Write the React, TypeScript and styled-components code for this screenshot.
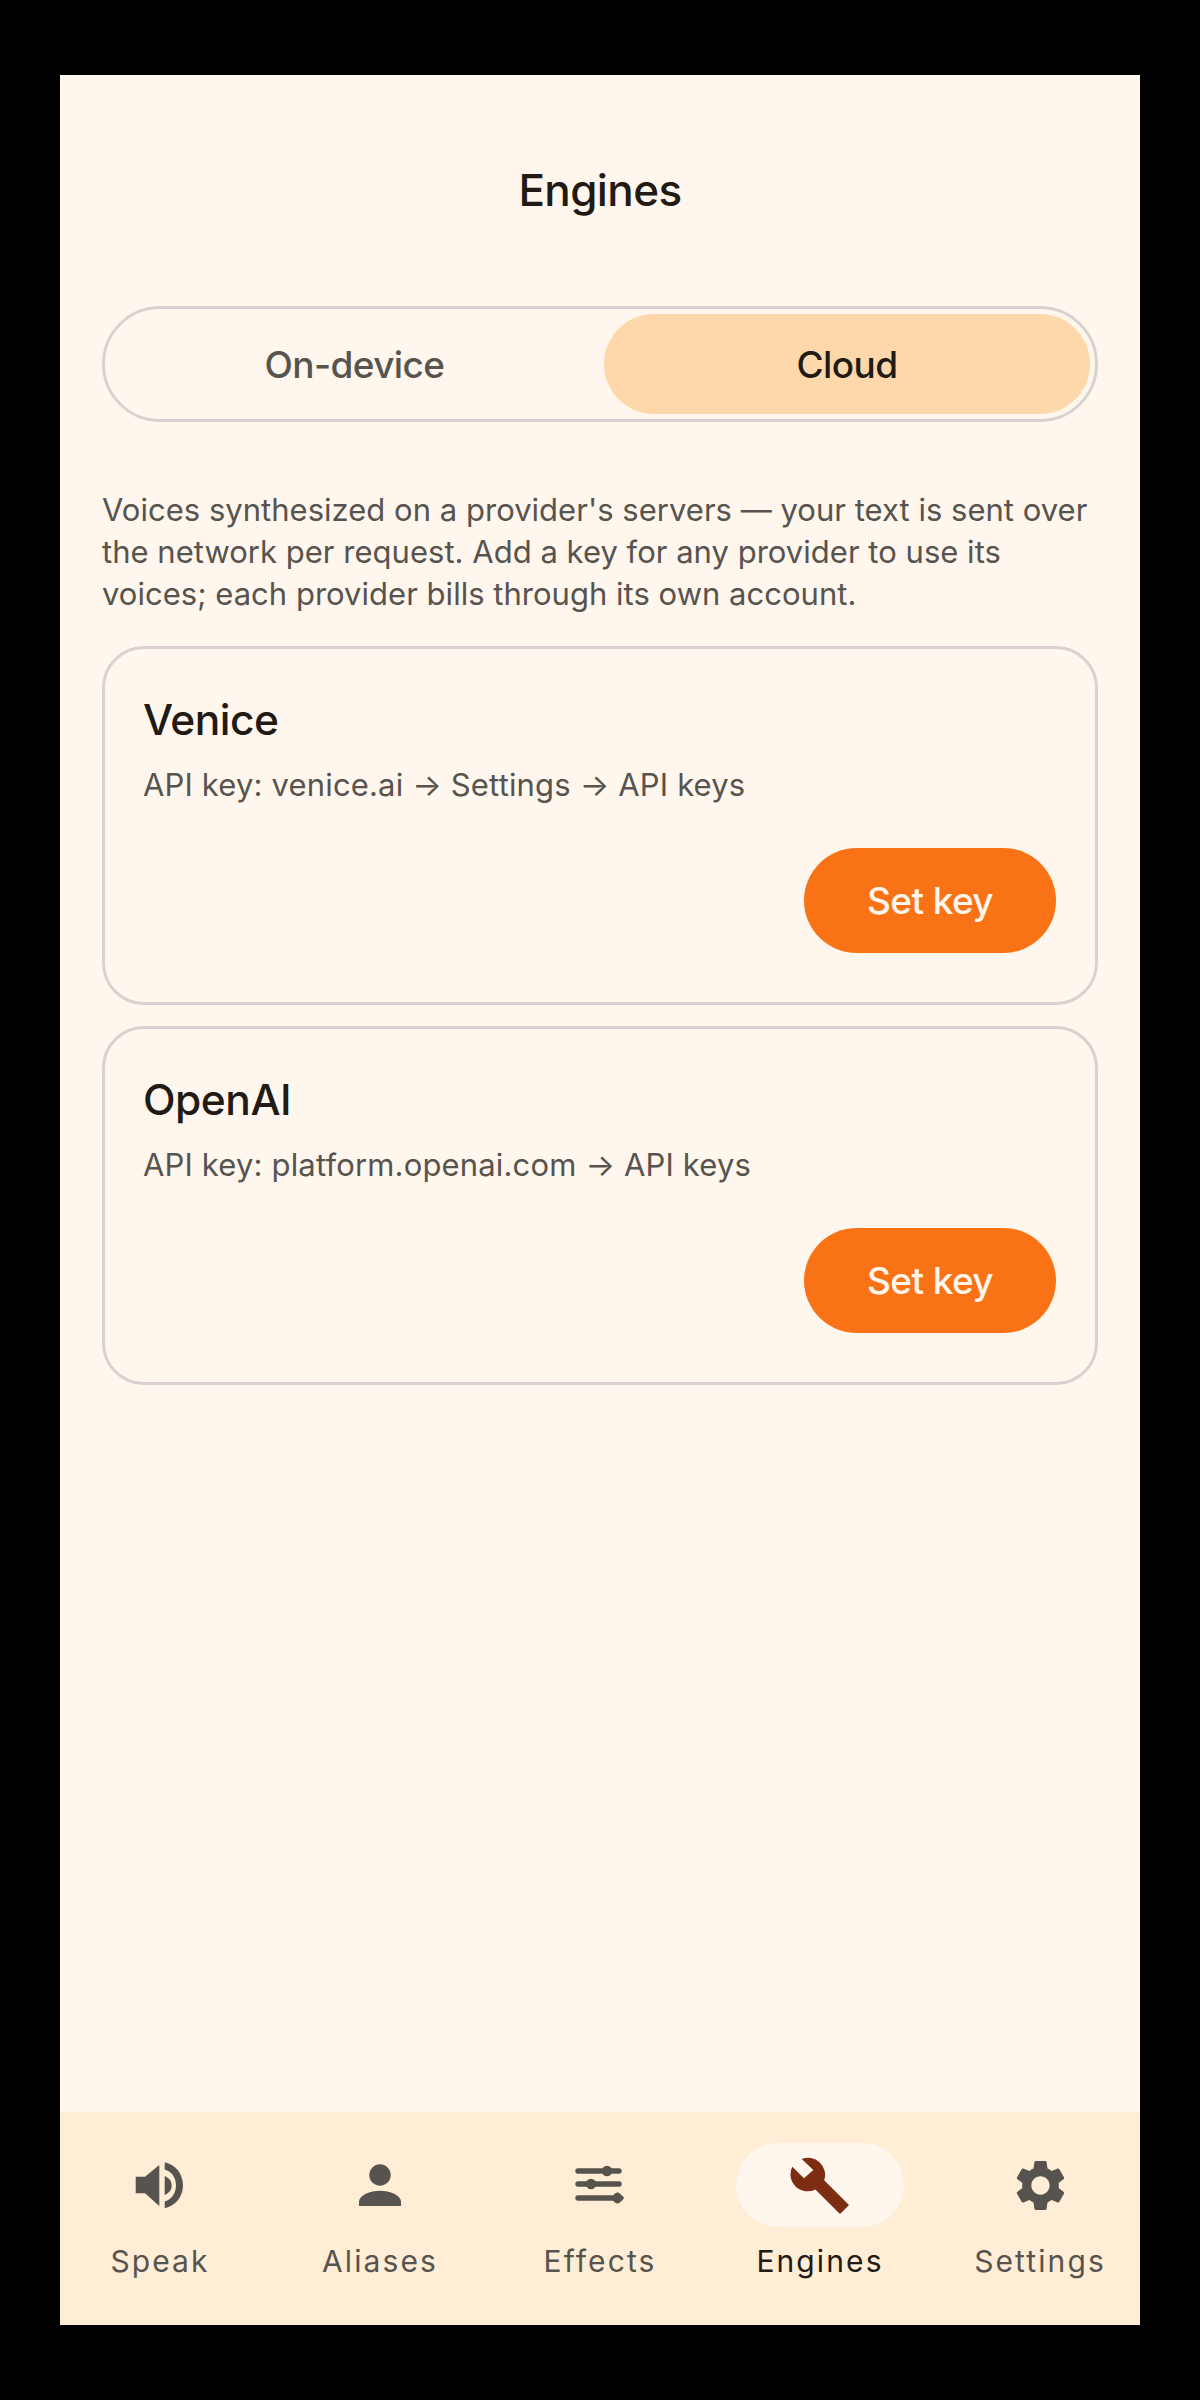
import * as React from 'react';
import styled, { createGlobalStyle } from 'styled-components';
import { MdSettings } from 'react-icons/md';

const GlobalStyle = createGlobalStyle`
  html, body {
    margin: 0;
    padding: 0;
    background: #000;
  }
  * {
    box-sizing: border-box;
  }
`;

const Frame = styled.div`
  width: 1200px;
  height: 2400px;
  padding: 75px 60px;
  background: #000;
  font-family: Inter, 'Noto Sans', sans-serif;
`;

const Screen = styled.div`
  width: 1080px;
  height: 2250px;
  display: flex;
  flex-direction: column;
  background: #fff7ed;
`;

const Content = styled.main`
  flex: 1;
  padding: 0 42px;
`;

const Title = styled.h1`
  margin: 0;
  padding: 90px 0 91px;
  font-size: 44px;
  line-height: 50px;
  font-weight: 500;
  letter-spacing: -0.6px;
  text-align: center;
  color: #221a14;
`;

const Segments = styled.div`
  height: 116px;
  padding: 5px 5px 5px 0;
  display: grid;
  grid-template-columns: 1fr 486px;
  border: 3px solid #d6d3d1;
  border-radius: 58px;
`;

const Segment = styled.div<{ $active?: boolean }>`
  display: flex;
  align-items: center;
  justify-content: center;
  border-radius: 50px;
  font-size: 37px;
  font-weight: 500;
  letter-spacing: -0.6px;
  color: ${(p) => (p.$active ? '#221a14' : '#57534e')};
  background: ${(p) => (p.$active ? '#fed7aa' : 'transparent')};
`;

const Intro = styled.p`
  margin: 67px 0 31px;
  font-size: 31px;
  line-height: 42px;
  letter-spacing: 0.02px;
  color: #57534e;
`;

const Cards = styled.div`
  display: flex;
  flex-direction: column;
  gap: 21px;
`;

const Card = styled.section`
  height: 359px;
  padding: 47px 39px 49px 38px;
  display: flex;
  flex-direction: column;
  border: 3px solid #d6d3d1;
  border-radius: 42px;
`;

const CardName = styled.div`
  font-size: 42.5px;
  line-height: 48px;
  font-weight: 500;
  letter-spacing: -0.5px;
  color: #221a14;
`;

const CardHint = styled.div`
  margin-top: 20px;
  font-size: 31px;
  line-height: 42px;
  letter-spacing: 0.16px;
  color: #57534e;
`;

const CardActions = styled.div`
  margin-top: auto;
  display: flex;
  justify-content: flex-end;
`;

const SetKey = styled.button`
  width: 252px;
  height: 105px;
  border: 0;
  border-radius: 53px;
  font-family: inherit;
  font-size: 37px;
  font-weight: 500;
  letter-spacing: -0.6px;
  color: #fff7ed;
  background: #f97316;
`;

const Nav = styled.nav`
  height: 213px;
  padding: 31px 20px 0;
  display: flex;
  justify-content: space-between;
  background: #ffedd5;
`;

const NavItem = styled.div`
  width: 160px;
  display: flex;
  flex-direction: column;
  align-items: center;
`;

const NavIcon = styled.div<{ $active?: boolean }>`
  flex: none;
  width: 168px;
  height: 84px;
  display: flex;
  align-items: center;
  justify-content: center;
  border-radius: 42px;
  color: ${(p) => (p.$active ? '#7c2d12' : '#57534e')};
  background: ${(p) => (p.$active ? '#fff7ed' : 'transparent')};
`;

const NavLabel = styled.div<{ $active?: boolean }>`
  margin-top: 14px;
  font-size: 30px;
  line-height: 40px;
  letter-spacing: 2.1px;
  white-space: nowrap;
  color: ${(p) => (p.$active ? '#221a14' : '#57534e')};
`;

const SpeakerIcon = () => (
  <svg width="50" height="50" viewBox="0 0 50 50" fill="currentColor">
    <path d="M0.7 16.7H10L24.3 5V46L10 33.3H0.7Z" />
    <path d="M29.7 16C34 18 36.7 21 36.7 25.5C36.7 30 34 33 29.7 35Z" />
    <path d="M29.7 2.3C40.5 4.5 48 14 48 25.3C48 36.6 40.5 46 29.7 48.3V41.5C36.7 39.5 41 33 41 25.3C41 17.6 36.7 11.5 29.7 9.5Z" />
  </svg>
);

const PersonIcon = () => (
  <svg width="44" height="46" viewBox="0 0 44 46" fill="currentColor">
    <circle cx="22" cy="13" r="10.7" />
    <path d="M1 44V40C1 33 12 28.7 22 28.7C32 28.7 43 33 43 40V44Z" />
  </svg>
);

const TuneIcon = () => (
  <svg width="52" height="42" viewBox="0 0 52 42" fill="currentColor">
    <path d="M4 7H45M4 20H45M4 34H45" stroke="currentColor" strokeWidth="5.4" strokeLinecap="round" />
    <circle cx="33" cy="7" r="5.2" />
    <circle cx="17" cy="20" r="5.2" />
    <path d="M44 28.5C45 28.5 50 33 50 34C50 35 45 39.5 44 39.5C41 39.5 38.6 37 38.6 34C38.6 31 41 28.5 44 28.5Z" />
  </svg>
);

const WrenchIcon = () => (
  <svg width="62" height="62" viewBox="-1 -1 62 62" fill="currentColor">
    <path d="M11.7 4A17 17 0 0 1 34.2 25.2L59 50L50 59L25.4 34.4A17 17 0 0 1 2.3 11.7L14 23.3L23.3 15Z" />
  </svg>
);

const tabs = [
  { label: 'Speak', icon: <SpeakerIcon /> },
  { label: 'Aliases', icon: <PersonIcon /> },
  { label: 'Effects', icon: <TuneIcon /> },
  { label: 'Engines', icon: <WrenchIcon />, active: true },
  { label: 'Settings', icon: <MdSettings size={61} /> },
];

const providers = [
  { name: 'Venice', hint: 'API key: venice.ai → Settings → API keys' },
  { name: 'OpenAI', hint: 'API key: platform.openai.com → API keys' },
];

const App: React.FC = () => (
  <Frame>
    <GlobalStyle />
    <Screen>
      <Content>
        <Title>Engines</Title>
        <Segments>
          <Segment>On-device</Segment>
          <Segment $active>Cloud</Segment>
        </Segments>
        <Intro>
          Voices synthesized on a provider's servers — your text is sent over the network per
          request. Add a key for any provider to use its voices; each provider bills through its
          own account.
        </Intro>
        <Cards>
          {providers.map((p) => (
            <Card key={p.name}>
              <CardName>{p.name}</CardName>
              <CardHint>{p.hint}</CardHint>
              <CardActions>
                <SetKey>Set key</SetKey>
              </CardActions>
            </Card>
          ))}
        </Cards>
      </Content>
      <Nav>
        {tabs.map((t) => (
          <NavItem key={t.label}>
            <NavIcon $active={t.active}>{t.icon}</NavIcon>
            <NavLabel $active={t.active}>{t.label}</NavLabel>
          </NavItem>
        ))}
      </Nav>
    </Screen>
  </Frame>
);

export default App;
